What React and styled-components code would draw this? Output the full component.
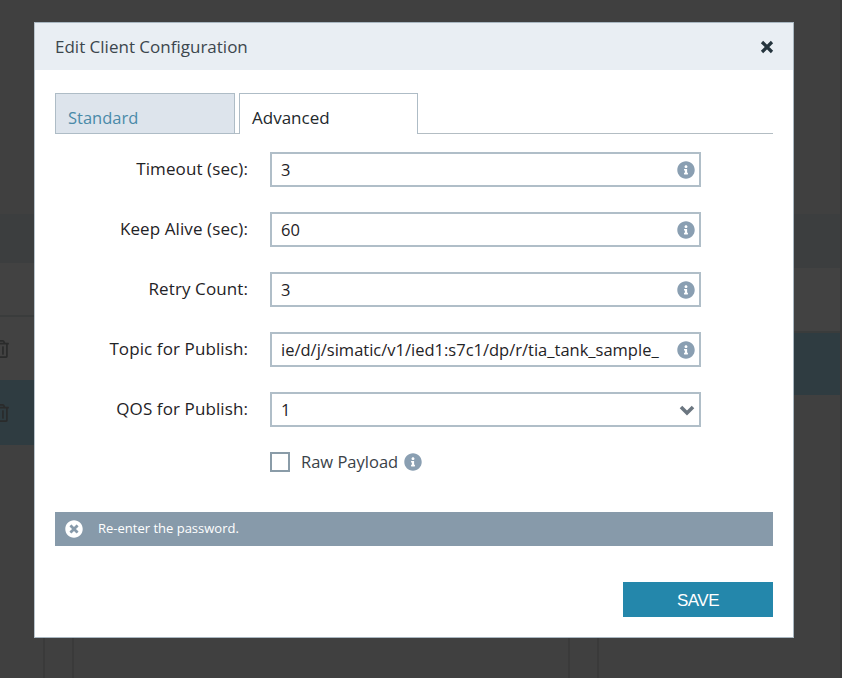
import React from 'react';
import styled, { createGlobalStyle } from 'styled-components';
import { FaInfoCircle, FaTimesCircle, FaRegTrashAlt } from 'react-icons/fa';

const GlobalStyle = createGlobalStyle`
  html, body {
    margin: 0;
    padding: 0;
    background: #404040;
  }
  * {
    box-sizing: border-box;
  }
`;

const Page = styled.div`
  position: relative;
  display: flex;
  width: 842px;
  height: 678px;
  overflow: hidden;
  background: #404040;
  font-family: "Open Sans", "Noto Sans", sans-serif;
`;

const Pane = styled.div`
  display: flex;
  flex-direction: column;
  width: ${props => props.$width}px;
  padding-top: 214px;
`;

const HeadBand = styled.div`
  height: ${props => props.$height}px;
  background: #3c3e3f;
`;

const TableRow = styled.div`
  display: flex;
  align-items: center;
  height: ${props => props.$height}px;
  background: ${props => (props.$selected ? '#2f3c41' : '#424242')};
  border-bottom: ${props => (props.$line ? '2px solid #3a3c3c' : 'none')};
  color: #2a2b2b;
`;

const RowIcon = styled(FaRegTrashAlt)`
  margin-left: -8px;
`;

const Lower = styled.div`
  flex: 1;
  margin-left: ${props => props.$left}px;
  border-left: 2px solid #3a3a3a;
  background: #404040;
`;

const LowerInner = styled.div`
  height: 100%;
  margin-left: 27px;
  border-left: 2px solid #3a3a3a;
  border-right: 2px solid #3a3a3a;
`;

const StripedPane = styled(Pane)`
  border-right: 2px solid #3a3a3a;
`;

const Modal = styled.div`
  position: absolute;
  left: 34px;
  top: 22px;
  width: 760px;
  height: 616px;
  background: #ffffff;
  border: 1px solid #a9b7c1;
  border-left-color: #b9c4cc;
`;

const ModalHeader = styled.div`
  display: flex;
  align-items: center;
  justify-content: space-between;
  height: 47px;
  padding: 0 19px 0 20px;
  background: #e9eef3;
`;

const ModalTitle = styled.div`
  font-size: 17px;
  color: #3c464d;
`;

const CloseIcon = styled.svg`
  width: 14px;
  height: 14px;
  stroke: #25343d;
  stroke-width: 3.2;
  fill: none;
`;

const ModalBody = styled.div`
  padding: 23px 20px 0;
`;

const TabBar = styled.div`
  display: flex;
  gap: 4px;
  height: 41px;
  border-bottom: 1px solid #b3bdc3;
`;

const Tab = styled.div`
  width: ${props => props.$width}px;
  height: 41px;
  padding: 12px 0 0 12px;
  font-size: ${props => (props.$active ? 17 : 16.5)}px;
  line-height: 24px;
  color: ${props => (props.$active ? '#23282c' : '#4a8aa8')};
  background: ${props => (props.$active ? '#ffffff' : '#dde4ec')};
  border: 1px solid #aebcc6;
  border-bottom: ${props => (props.$active ? 'none' : '1px solid #aebcc6')};
`;

const Form = styled.div`
  display: grid;
  grid-template-columns: 193px 431px;
  column-gap: 22px;
  row-gap: 25px;
  align-items: center;
  margin-top: 18px;
`;

const FieldLabel = styled.label`
  padding-bottom: 2px;
  font-size: 17px;
  letter-spacing: 0.1px;
  color: #1f2326;
  text-align: right;
`;

const Field = styled.div`
  position: relative;
  height: 35px;
`;

const FieldInput = styled.input`
  width: 100%;
  height: 100%;
  padding: 0 38px 0 9px;
  border: 2px solid #b0bec8;
  border-radius: 0;
  outline: none;
  background: #ffffff;
  font-family: inherit;
  font-size: 16.5px;
  color: #1f2326;
`;

const FieldIcon = styled.span`
  position: absolute;
  right: 6px;
  top: 9px;
  display: flex;
  color: #8a9fb2;
`;

const Chevron = styled.svg`
  width: 16px;
  height: 17px;
  stroke: #6b7680;
  stroke-width: 3.6;
  fill: none;
`;

const CheckLine = styled.div`
  grid-column: 2;
  display: flex;
  align-items: center;
  height: 20px;
`;

const CheckBox = styled.span`
  width: 20px;
  height: 20px;
  border: 2px solid #8a9ca8;
`;

const CheckLabel = styled.span`
  margin: 0 6px 0 11px;
  padding-bottom: 2px;
  font-size: 16.5px;
  color: #3a4248;
`;

const InfoIcon = styled(FaInfoCircle)`
  color: #8a9fb2;
`;

const Alert = styled.div`
  display: flex;
  align-items: center;
  gap: 15px;
  height: 34px;
  margin-top: 40px;
  padding-left: 10px;
  background: #879aaa;
  color: #ffffff;
  font-size: 13px;
`;

const AlertText = styled.span`
  padding-bottom: 2px;
`;

const Footer = styled.div`
  display: flex;
  justify-content: flex-end;
  margin-top: 36px;
`;

const SaveButton = styled.button`
  width: 150px;
  height: 35px;
  padding-top: 3px;
  border: none;
  border-radius: 0;
  background: #2487ab;
  color: #ffffff;
  font-family: "Liberation Sans", Arial, sans-serif;
  font-size: 17px;
  letter-spacing: -0.5px;
`;

const fields = [
  { label: 'Timeout (sec):', value: '3' },
  { label: 'Keep Alive (sec):', value: '60' },
  { label: 'Retry Count:', value: '3' },
  { label: 'Topic for Publish:', value: 'ie/d/j/simatic/v1/ied1:s7c1/dp/r/tia_tank_sample_' },
];

const App = () => (
  <>
    <GlobalStyle />
    <Page>
      <Pane $width={570}>
        <HeadBand $height={49} />
        <TableRow $height={54} $line />
        <TableRow $height={63}>
          <RowIcon size={18} />
        </TableRow>
        <TableRow $height={65} $selected>
          <RowIcon size={18} />
        </TableRow>
        <Lower $left={43}>
          <LowerInner />
        </Lower>
      </Pane>
      <StripedPane $width={272}>
        <HeadBand $height={54} />
        <TableRow $height={65} $line />
        <TableRow $height={62} $selected />
        <Lower $left={27} />
      </StripedPane>

      <Modal>
        <ModalHeader>
          <ModalTitle>Edit Client Configuration</ModalTitle>
          <CloseIcon viewBox="0 0 14 14">
            <path d="M2 2 L12 12 M12 2 L2 12" />
          </CloseIcon>
        </ModalHeader>
        <ModalBody>
          <TabBar>
            <Tab $width={180}>Standard</Tab>
            <Tab $width={179} $active>Advanced</Tab>
          </TabBar>
          <Form>
            {fields.map(field => (
              <React.Fragment key={field.label}>
                <FieldLabel>{field.label}</FieldLabel>
                <Field>
                  <FieldInput value={field.value} readOnly />
                  <FieldIcon>
                    <FaInfoCircle size={18} />
                  </FieldIcon>
                </Field>
              </React.Fragment>
            ))}
            <FieldLabel>QOS for Publish:</FieldLabel>
            <Field>
              <FieldInput value="1" readOnly />
              <FieldIcon>
                <Chevron viewBox="0 0 16 17">
                  <path d="M2 6 L8 12 L14 6" />
                </Chevron>
              </FieldIcon>
            </Field>
            <CheckLine>
              <CheckBox />
              <CheckLabel>Raw Payload</CheckLabel>
              <InfoIcon size={18} />
            </CheckLine>
          </Form>
          <Alert>
            <FaTimesCircle size={18} />
            <AlertText>Re-enter the password.</AlertText>
          </Alert>
          <Footer>
            <SaveButton>SAVE</SaveButton>
          </Footer>
        </ModalBody>
      </Modal>
    </Page>
  </>
);

export default App;
